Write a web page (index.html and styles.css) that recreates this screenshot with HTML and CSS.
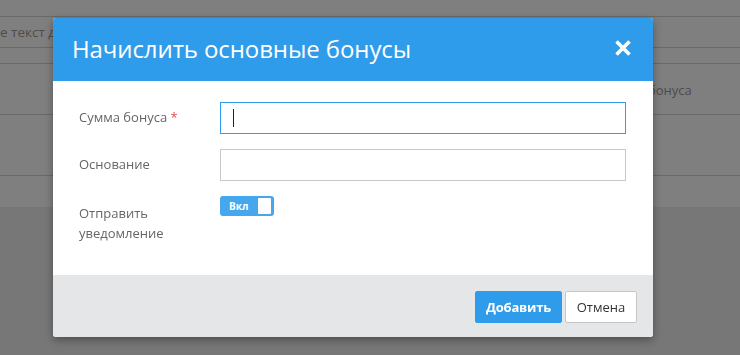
FILE: index.html
```html
<!DOCTYPE html>
<html lang="ru">
<head>
<meta charset="utf-8">
<title>Начислить основные бонусы</title>
<link rel="stylesheet" href="styles.css">
</head>
<body>
<div class="page">
  <div class="pg-top"></div>
  <div class="pg-row pg-search"><span class="pg-ph">е текст для поиска</span></div>
  <div class="pg-row pg-thin"></div>
  <div class="pg-row pg-head"><span class="pg-col">бонуса</span></div>
  <div class="pg-row pg-tall"></div>
  <div class="pg-row pg-last"></div>
</div>
<div class="overlay"></div>
<div class="modal">
  <div class="modal-header">
    <h1 class="modal-title">Начислить основные бонусы</h1>
    <button class="close" type="button" aria-label="Закрыть">
      <svg width="18" height="18" viewBox="0 0 18 18"><path d="M2.5 2.5 L15.5 15.5 M15.5 2.5 L2.5 15.5" stroke="#fff" stroke-width="3.6" stroke-linecap="butt"/></svg>
    </button>
  </div>
  <div class="modal-body">
    <div class="form-row">
      <label class="label">Сумма бонуса <span class="req">*</span></label>
      <div class="field"><input class="input focus" type="text"><span class="caret"></span></div>
    </div>
    <div class="form-row">
      <label class="label">Основание</label>
      <div class="field"><input class="input" type="text"></div>
    </div>
    <div class="form-row">
      <label class="label label-2">Отправить уведомление</label>
      <div class="field"><span class="toggle"><span class="toggle-text">Вкл</span><span class="knob"></span></span></div>
    </div>
  </div>
  <div class="modal-footer">
    <button class="btn btn-primary" type="button">Добавить</button>
    <button class="btn btn-default" type="button">Отмена</button>
  </div>
</div>
</body>
</html>
```
FILE: styles.css
```css
* { box-sizing: border-box; }
html, body { margin: 0; padding: 0; }
body {
  width: 740px;
  height: 355px;
  overflow: hidden;
  background: #eeeeee;
  font-family: "Open Sans", "Noto Sans", sans-serif;
  position: relative;
}
.page {
  background: #ffffff;
  height: 207px;
}
.pg-top { height: 17px; background: #fff; border-bottom: 1px solid #d4d4d4; }
.pg-row { border-bottom: 1px solid #d4d4d4; position: relative; }
.pg-search { height: 31px; }
.pg-ph {
  position: absolute; left: 0; top: 6px;
  width: 53px; overflow: hidden;
  font-size: 13.5px; color: #9a9a9a; white-space: nowrap;
}
.pg-thin { height: 16px; }
.pg-head { height: 51px; }
.pg-col {
  position: absolute; left: 648px; top: 17px;
  font-size: 13px; color: #999; white-space: nowrap;
}
.pg-tall { height: 61px; }
.pg-last { height: 31px; border-bottom: none; }

.overlay {
  position: fixed; inset: 0;
  background: rgba(0, 0, 0, 0.5);
}
.modal {
  position: absolute;
  left: 53px; top: 18px;
  width: 600px;
  background: #fff;
  border-radius: 3px;
  box-shadow: 0 3px 8px rgba(0, 0, 0, 0.35);
  overflow: hidden;
}
.modal-header {
  height: 63px;
  background: #2f9ceb;
  display: flex;
  align-items: center;
  justify-content: space-between;
  padding: 0 21px 0 19px;
}
.modal-title {
  margin: 0;
  font-size: 24px;
  font-weight: 400;
  color: #fff;
  letter-spacing: -0.1px;
  padding-bottom: 2px;
}
.close {
  background: none; border: 0; padding: 0;
  width: 18px; height: 18px;
  display: flex;
  margin-top: -3px;
}
.modal-body {
  padding: 21px 27px 0 26px;
  height: 194px;
}
.form-row {
  display: flex;
  align-items: flex-start;
  margin-bottom: 15px;
}
.label {
  width: 141px;
  flex: none;
  font-size: 13px;
  color: #666;
  line-height: 20px;
  padding-top: 5px;
}
.label-2 { width: 120px; margin-right: 21px; padding-top: 7px; line-height: 20px; }
.req { color: #e84c4c; }
.field { flex: 1; position: relative; }
.input {
  display: block;
  width: 100%;
  height: 32px;
  border: 1px solid #c8c8c8;
  background: #fff;
  font-family: inherit;
  outline: none;
  padding: 0 12px;
}
.input.focus { border-color: #2f9ceb; }
.caret {
  position: absolute; left: 13px; top: 7px;
  width: 1px; height: 18px; background: #222;
}
.toggle {
  display: flex;
  align-items: center;
  width: 54px; height: 20px;
  background: #45a7ed;
  border-radius: 3px;
  padding: 2px 3px 2px 0;
  justify-content: space-between;
}
.toggle-text {
  color: #fff; font-size: 10px; font-weight: 700;
  padding-left: 9px; line-height: 16px;
}
.knob {
  width: 13px; height: 16px; background: #fff; border-radius: 1px;
}
.modal-footer {
  background: #e5e6e8;
  height: 62px;
  display: flex;
  justify-content: flex-end;
  align-items: center;
  gap: 3px;
  padding: 0 16px 0 0;
}
.btn {
  font-family: inherit;
  font-size: 13px;
  height: 32px;
  border-radius: 2px;
  cursor: pointer;
  margin-top: 1px;
}
.btn-primary {
  background: #2f9ceb;
  color: #fff;
  border: 1px solid #2f9ceb;
  font-weight: 700;
  width: 87px;
  letter-spacing: -0.2px;
}
.btn-default {
  background: #fff;
  color: #333;
  border: 1px solid #c6c6c6;
  width: 72px;
}
```
